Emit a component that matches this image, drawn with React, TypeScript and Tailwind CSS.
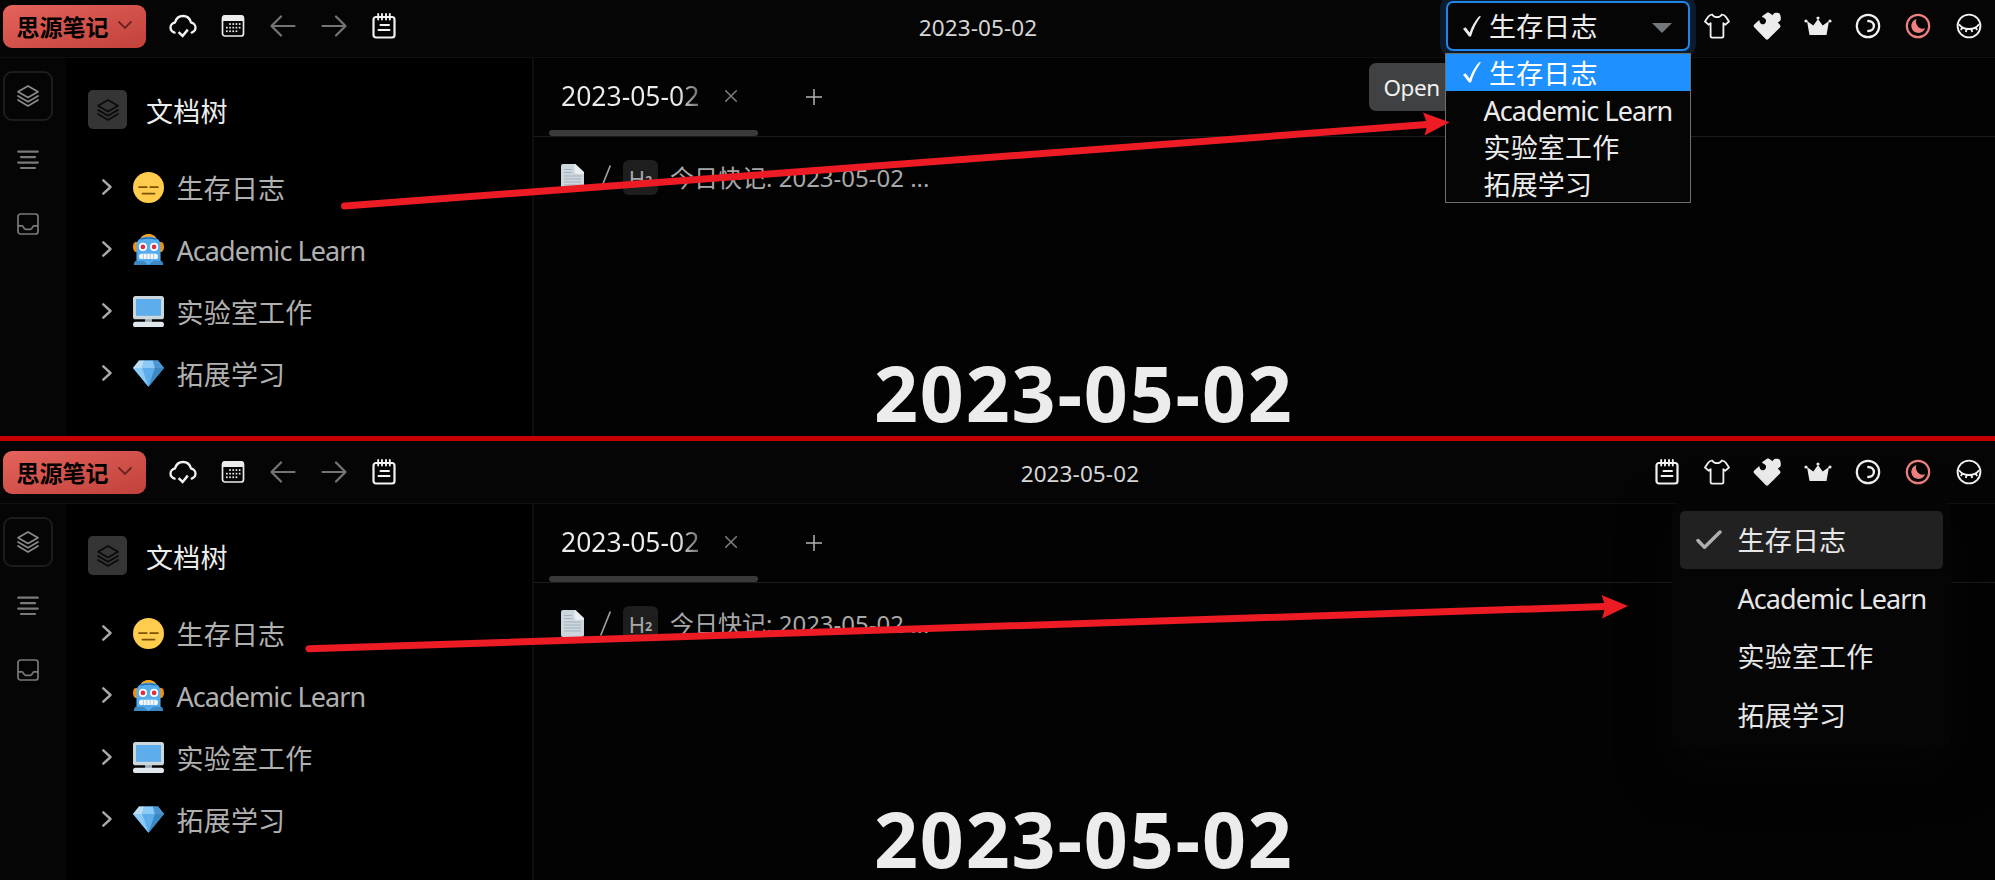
import React from "react";

type IconProps = { className?: string };

const CloudCheck = () => (
  <svg viewBox="0 0 28 24" className="h-6 w-7" fill="none" stroke="#f2f2f2" strokeWidth="2.3" strokeLinecap="round" strokeLinejoin="round">
    <path d="M5.6 18.6C3 17.8 1.5 16 1.5 13.6c0-2.7 2-4.8 4.5-5.1C7 4.7 10.2 2 14 2s7 2.7 8 6.5c2.5.3 4.5 2.4 4.5 5.1 0 2.4-1.5 4.2-3.8 5" />
    <path d="M9.6 18.2l4 3.800 5.200-6.400" strokeWidth="2.5" strokeLinecap="butt" strokeLinejoin="miter" />
  </svg>
);

const CalendarGrid = () => (
  <svg viewBox="0 0 24 24" className="size-6">
    <rect x="1.5" y="2" width="21" height="20" rx="2.5" fill="none" stroke="#ececec" strokeWidth="1.7" />
    <path d="M1 7V4a3 3 0 0 1 3-3h16a3 3 0 0 1 3 3v3z" fill="#ececec" />
    <g fill="#ececec">
      {[9.2, 12.8, 16.4].map((y, r) =>
        [5, 8.2, 11.4, 14.6, 17.8].map((x, c) =>
          (r === 0 && c < 1) || (r === 2 && c > 3) ? null : <rect key={`${r}${c}`} x={x} y={y} width="1.7" height="1.7" />
        )
      )}
    </g>
  </svg>
);

const ArrowIcon = ({ className = "" }: IconProps) => (
  <svg viewBox="0 0 26 22" className={`h-[22px] w-[26px] ${className}`} fill="none" stroke="#747474" strokeWidth="2.2" strokeLinecap="round" strokeLinejoin="round">
    <path d="M24.5 11H1.500M11 1.500L1.500 11l9.500 9.500" />
  </svg>
);

const NoteIcon = () => (
  <svg viewBox="0 0 24 26" className="h-[26px] w-6" fill="none" stroke="#f2f2f2" strokeLinecap="round">
    <rect x="1.500" y="4" width="21" height="20.500" rx="2.500" strokeWidth="2.200" />
    <path d="M6.200 1v5.500M10 1v5.500M14 1v5.500M17.800 1v5.500" strokeWidth="1.900" />
    <path d="M8.500 12h8.500M6.500 17h11" strokeWidth="2" />
  </svg>
);

const ShirtIcon = () => (
  <svg viewBox="0 0 26 26" className="size-[26px]" fill="none" stroke="#f2f2f2" strokeWidth="1.800" strokeLinejoin="round">
    <path d="M8 1.500c1.300 2 3 2.700 5 2.700s3.700-.7 5-2.700c2 .5 3 1 4 2.500l3 4.500-3.600 3.200-2-1.600V23c0 1-.6 1.600-1.600 1.600H8.200c-1 0-1.600-.6-1.600-1.600V10.100l-2 1.600L1 8.500 4 4c1-1.500 2-2 4-2.500z" />
  </svg>
);

const PuzzleIcon = () => (
  <svg viewBox="0 0 28 28" className="size-7" fill="#ececec">
    <path d="M1 12.800c-.5.700-.5 1.600 0 2.300l11.600 12c.8.800 2 .8 2.800 0L27 15.400c.6-.8.600-1.700 0-2.500l-2.300-2.700c2.500-.4 3.300-2 3.100-4.200C27.600 2 26.300.3 22.800.8c-1.700.2-2.500 1-3 2.400L16.400.9c-.8-.6-2-.6-2.800 0L9 4.300c.3 1 1.200 1.300 2 1.600 2 .8 2.500 2.500 1.700 4.300-.8 1.900-2.600 2.500-4.300 1.700C6.900 11.200 6.800 10 6.200 8z" />
  </svg>
);

const CrownIcon = () => (
  <svg viewBox="0 0 28 20" className="h-5 w-7" fill="#ececec">
    <path d="M3 5l6.300 4.600L14 3l4.700 6.600L25 5l-2.500 14h-17z" />
    <circle cx="14" cy="2" r="1.600" />
    <circle cx="2" cy="5" r="1.600" />
    <circle cx="26" cy="5" r="1.600" />
  </svg>
);

const RingCrescent = () => (
  <svg viewBox="0 0 26 26" className="size-[26px]" fill="none" stroke="#f2f2f2" strokeWidth="2.200" strokeLinecap="round">
    <circle cx="13" cy="13" r="11.200" />
    <path d="M13.300 8c3.200 0 5.600 2.200 5.600 5s-2.400 5-5.600 5" strokeWidth="2.400" />
  </svg>
);

const RingMoon = () => (
  <svg viewBox="0 0 26 26" className="size-[26px]">
    <circle cx="13" cy="13" r="11.200" fill="none" stroke="#ee8080" strokeWidth="2.200" />
    <path d="M11.500 6a7.100 7.100 0 1 0 8.600 9.200A6.900 6.900 0 0 1 11.500 6z" fill="#ee8080" />
  </svg>
);

const RingEye = () => (
  <svg viewBox="0 0 26 26" className="size-[26px]" fill="none" stroke="#f2f2f2" strokeWidth="1.900">
    <circle cx="13" cy="13" r="11.400" />
    <path d="M3 11.200c2.500 3.600 6 4.800 10 4.800s7.500-1.200 10-4.800M6.800 14l-2 3M10.800 15.700l-1 3.300M15.200 15.700l1 3.300M19.200 14l2 3" />
  </svg>
);

const LayersIcon = ({ className = "" }: IconProps) => (
  <svg viewBox="0 0 22 22" className={`size-[22px] ${className}`} fill="none" stroke="currentColor" strokeWidth="1.700" strokeLinejoin="round" strokeLinecap="round">
    <path d="M11 1l10 5.800-10 5.700L1 6.800z" />
    <path d="M1 11l10 5.800L21 11" />
    <path d="M1 15l10 6 10-6" />
  </svg>
);

const OutlineIcon = () => (
  <svg viewBox="0 0 22 20" className="h-5 w-[22px]" stroke="#7a7a7a" strokeWidth="2.200" strokeLinecap="round">
    <path d="M1.200 1.700h19.600M4 7.200h14M1.200 12.600h19.600M4 18h14" />
  </svg>
);

const InboxIcon = () => (
  <svg viewBox="0 0 22 22" className="size-[22px]" fill="none" stroke="#7a7a7a" strokeWidth="1.700" strokeLinejoin="round">
    <rect x="1" y="1" width="20" height="20" rx="2.500" />
    <path d="M1 12.800h4.200c1.200 0 1.300 3.600 3.400 3.600h4.800c2.100 0 2.200-3.600 3.400-3.600H21" />
  </svg>
);

const FaceEmoji = () => (
  <svg viewBox="0 0 36 36" className="size-[31px]">
    <circle cx="18" cy="18" r="18" fill="#ffcc4d" />
    <path d="M7 17.500h9M20 17.500h9M11 25h14" stroke="#7a5200" strokeWidth="2" strokeLinecap="round" />
  </svg>
);

const RobotEmoji = () => (
  <svg viewBox="0 0 36 36" className="size-[31px]">
    <ellipse cx="3.500" cy="15" rx="3.500" ry="6" fill="#f4900c" />
    <ellipse cx="32.500" cy="15" rx="3.500" ry="6" fill="#f4900c" />
    <path d="M9 5c1-3 5-5 9-5s8 2 9 5z" fill="#f9a11b" />
    <path d="M4 32V13C4 7 10 3 18 3s14 4 14 10v19z" fill="#55acee" />
    <path d="M8 6c3-2.600 17-2.600 20 0l-2 .5c-4-1.500-12-1.500-16 0z" fill="#226699" />
    <path d="M1 36c0-3 1-5 3-5h28c2 0 3 2 3 5z" fill="#3b88c3" />
    <path d="M12 31h12l-6 5z" fill="#55acee" />
    <circle cx="11.500" cy="15" r="4.700" fill="#fff" />
    <circle cx="24.500" cy="15" r="4.700" fill="#fff" />
    <circle cx="11.500" cy="15" r="2.700" fill="#dd2e44" />
    <circle cx="24.500" cy="15" r="2.700" fill="#dd2e44" />
    <rect x="7" y="23" width="22" height="6" rx="3" fill="#f5f8fa" />
    <path d="M12 23v6M16 23v6M20 23v6M24 23v6" stroke="#9fc4de" strokeWidth="1" />
  </svg>
);

const ScreenEmoji = () => (
  <svg viewBox="0 0 36 36" className="size-[31px]">
    <path d="M14 25h8v6h-8z" fill="#99aab5" />
    <rect x="0" y="0" width="36" height="27" rx="3" fill="#ccd6dd" />
    <rect x="3.500" y="3.500" width="29" height="19.500" fill="#5dadec" />
    <rect x="0" y="30" width="36" height="6" rx="3" fill="#e1e8ed" />
  </svg>
);

const GemEmoji = () => (
  <svg viewBox="0 0 36 31" className="h-[27px] w-[31px]">
    <path d="M7 .5h22l7 8.500-18 22L0 9z" fill="#5dadec" />
    <path d="M7 .5L0 9h10.500l2.500-8.500z" fill="#bdddf4" />
    <path d="M13 .5h10L25.500 9h-15z" fill="#8ccaf7" />
    <path d="M0 9h10.500L18 31z" fill="#8ccaf7" />
    <path d="M36 9H25.500L18 31z" fill="#3b88c3" />
    <path d="M29 .5L36 9H25.500L23 .5z" fill="#4b96d2" />
  </svg>
);

const DocEmoji = () => (
  <svg viewBox="0 0 23 27" className="h-[27px] w-[23px]">
    <path d="M2 0h12.500L23 8v17a2 2 0 0 1-2 2H2a2 2 0 0 1-2-2V2a2 2 0 0 1 2-2z" fill="#ccd6dd" />
    <path d="M14 0l9 8.500V10h-7a2.500 2.500 0 0 1-2.500-2.500V0z" fill="#e8eef2" />
    <path d="M3 5.500h8M3 8.500h8M3 12h17M3 15h17M3 18h17M3 21h17" stroke="#a3b2bd" strokeWidth="1.200" />
  </svg>
);

const notebooks: { name: string; tracking: string; emoji: React.ReactNode }[] = [
  { name: "生存日志", tracking: "tracking-[0.200px]", emoji: <FaceEmoji /> },
  { name: "Academic Learn", tracking: "tracking-[-0.930px]", emoji: <RobotEmoji /> },
  { name: "实验室工作", tracking: "tracking-[0.200px]", emoji: <ScreenEmoji /> },
  { name: "拓展学习", tracking: "tracking-[0.200px]", emoji: <GemEmoji /> },
];

const Slot = ({ children }: { children: React.ReactNode }) => (
  <div className="flex h-full w-[50.350px] shrink-0 items-center justify-center">{children}</div>
);

const Tick = () => (
  <svg viewBox="0 0 18 21" className="h-[21px] w-[18px] shrink-0" fill="currentColor">
    <path d="M0 12.800l2.600-1.600 4 5.400C9 10 12.200 4.800 16 .3h2C13.500 6.500 10.200 13 8 20.500H6z" />
  </svg>
);

const NotebookSelect = () => (
  <div className="relative mt-px mr-[2px] h-[50px] w-[244px] shrink-0 self-start rounded-[7px] border-2 border-[#2185e6] bg-[#050505] text-[#ececec] shadow-[0_0_0_6px_#0a1c2e]">
    <div className="flex h-full items-center pl-[15px] pr-[16px]">
      <Tick />
      <span className="ml-[8px] flex-1 text-[27px] leading-none tracking-[0.200px]">生存日志</span>
      <svg viewBox="0 0 20 10" className="mt-1 h-[10px] w-5">
        <path d="M0 0h20L10 10z" fill="#74777a" />
      </svg>
    </div>
    <div className="absolute -left-[3px] top-[50px] z-10 w-[246px] border border-[#6f6f6f] bg-[#050505]">
      {notebooks.map((n, i) =>
        i === 0 ? (
          <div key={n.name} className="flex h-[37px] items-center bg-[#1e90ff] pl-[17px] text-white">
            <Tick />
            <span className={`ml-[8px] pt-px text-[27px] leading-none ${n.tracking}`}>{n.name}</span>
          </div>
        ) : (
          <div key={n.name} className={`flex h-[37px] items-center whitespace-nowrap pl-[37.500px] pt-px text-[27px] leading-none ${n.tracking}`}>
            {n.name}
          </div>
        )
      )}
    </div>
    <div className="absolute -left-[79px] top-[60px] h-12 w-[77px] rounded-l-[7px] bg-[#404143] pl-[14.500px] text-[22.500px] leading-[50px] tracking-[-0.400px] text-[#f0f0f0]">
      Open
    </div>
  </div>
);

const NotebookMenu = () => (
  <div className="absolute right-[44px] top-[56px] z-10 h-[247px] w-[279px] rounded-[10px] bg-[#050505] px-2 pt-[9px] shadow-[0_20px_50px_rgba(8,8,8,0.5)]">
    {notebooks.map((n, i) => (
      <div key={n.name} className={`flex h-[58.300px] items-center whitespace-nowrap rounded-[5px] pl-4 text-[27px] leading-none text-[#e6e6e6] ${i === 0 ? "bg-[#212121]" : ""}`}>
        <span className="flex w-[41.500px]">
          {i === 0 && (
            <svg viewBox="0 0 26 20" className="h-5 w-[26px]" fill="none" stroke="#b0b0b0" strokeWidth="3.400" strokeLinecap="round" strokeLinejoin="round">
              <path d="M2 10.500l6.500 6.800L24 2" />
            </svg>
          )}
        </span>
        <span className={n.tracking}>{n.name}</span>
      </div>
    ))}
  </div>
);

const TopBar = ({ picker }: { picker: "select" | "menu" }) => (
  <header className="flex h-[58px] shrink-0 border-b border-[#101010] bg-[#050505] pb-[5px]">
    <div className="ml-[2.500px] mt-[4.500px] flex h-[43px] w-[143.500px] shrink-0 items-center rounded-[9px] bg-linear-to-br from-[#e4635c] to-[#c1423b] pl-[14px] text-black">
      <span className="pt-[2px] text-[23px] font-bold leading-none">思源笔记</span>
      <svg viewBox="0 0 14 8" className="-mt-0.5 ml-[9px] h-2 w-3.5" fill="none" stroke="#6b2320" strokeWidth="1.800" strokeLinecap="round">
        <path d="M1 1l6 6 6-6" />
      </svg>
    </div>
    <div className="ml-[11.500px] flex h-[52px] shrink-0">
      <Slot><CloudCheck /></Slot>
      <Slot><CalendarGrid /></Slot>
      <Slot><ArrowIcon /></Slot>
      <Slot><ArrowIcon className="rotate-180" /></Slot>
      <Slot><NoteIcon /></Slot>
    </div>
    <div className={`flex h-[56px] flex-1 items-center justify-center text-[22.500px] tracking-[0.100px] text-[#d6d6d6] ${picker === "select" ? "pl-[101px]" : "pl-[109px]"}`}>2023-05-02</div>
    {picker === "select" && <NotebookSelect />}
    <div className="mr-px flex h-[52px] shrink-0">
      {picker === "menu" && <Slot><NoteIcon /></Slot>}
      <Slot><ShirtIcon /></Slot>
      <Slot><PuzzleIcon /></Slot>
      <Slot><CrownIcon /></Slot>
      <Slot><RingCrescent /></Slot>
      <Slot><RingMoon /></Slot>
      <Slot><RingEye /></Slot>
    </div>
  </header>
);

const Rail = () => (
  <nav className="flex w-[66px] shrink-0 flex-col items-center bg-[#050505] pr-[10px] pt-[13px]">
    <div className="flex size-[50px] items-center justify-center rounded-[9px] border-2 border-[#1c1c1c] text-[#8a8a8a]">
      <LayersIcon />
    </div>
    <div className="mt-[7px] flex h-16 items-center"><OutlineIcon /></div>
    <div className="flex h-16 items-center"><InboxIcon /></div>
  </nav>
);

const DocTree = () => (
  <aside className="w-[467.500px] shrink-0 border-r-2 border-[#0e0e0e] bg-black pt-[32px]">
    <div className="flex h-[39px] items-center pl-[22px]">
      <div className="flex size-[39px] items-center justify-center rounded-[5px] bg-[#353535] text-[#0a0a0a]">
        <LayersIcon />
      </div>
      <span className="ml-[19px] mt-[3px] text-[27px] leading-none tracking-[0.200px] text-[#ececec]">文档树</span>
    </div>
    <ul className="mt-[27px]">
      {notebooks.map((n) => (
        <li key={n.name} className="flex h-[62.100px] items-center pl-9">
          <svg viewBox="0 0 10 16" className="h-4 w-2.5" fill="none" stroke="#a8a8a8" strokeWidth="2.400" strokeLinecap="round" strokeLinejoin="round">
            <path d="M1.300 1.300L8.500 8l-7.200 6.700" />
          </svg>
          <span className="ml-[20.500px] flex w-[31px]">{n.emoji}</span>
          <span className={`ml-[13px] mt-[2px] whitespace-nowrap text-[27px] leading-none text-[#b0b0b0] ${n.tracking}`}>{n.name}</span>
        </li>
      ))}
    </ul>
  </aside>
);

const Editor = () => (
  <main className="flex-1 bg-[#030303]">
    <div className="flex h-[78.500px] items-end border-b-[1.500px] border-[#1c1c1c]">
      <div className="ml-[15.500px] flex h-full w-[209px] flex-col">
        <div className="flex flex-1 items-center pl-3 pt-[5px]">
          <span className="bg-linear-to-r from-[#ececec] from-85% to-[#6a6a6a] bg-clip-text text-[26.500px] leading-none text-transparent">2023-05-02</span>
          <svg viewBox="0 0 12 12" className="ml-auto mr-[21px] size-3" stroke="#808080" strokeWidth="1.500" strokeLinecap="round">
            <path d="M.7.7l10.600 10.600M11.300.7L.7 11.300" />
          </svg>
        </div>
        <div className="h-[6px] w-full rounded-[3px] bg-[#3a3a3a]" />
      </div>
      <svg viewBox="0 0 16 16" className="mb-[31px] ml-12 size-4" stroke="#b4b4b4" strokeWidth="1.500">
        <path d="M8 0v16M0 8h16" />
      </svg>
    </div>
    <div className="mt-[23px] flex h-[35px] items-center pl-[27.500px] text-[24px] leading-none text-[#a8a8a8]">
      <DocEmoji />
      <svg viewBox="0 0 11 25" className="ml-[16px] h-[25px] w-[11px]" stroke="#a0a0a0" strokeWidth="1.600">
        <path d="M10.300.5L.7 24.500" />
      </svg>
      <span className="ml-[12px] flex size-[35px] items-center justify-center rounded-[6px] bg-[#1e1e1e] pt-px">
        <span className="text-[22px] leading-none">H</span>
        <span className="mt-[7px] text-[12.500px] font-bold leading-none">2</span>
      </span>
      <span className="ml-[12px] mt-px whitespace-nowrap">今日快记: 2023-05-02 ...</span>
    </div>
    <h1 className="ml-[340.500px] mt-[159px] whitespace-nowrap text-[77px] font-bold leading-[78px] tracking-[1.800px] text-[#ececec]">2023-05-02</h1>
  </main>
);

const Workspace = ({ picker }: { picker: "select" | "menu" }) => (
  <div className="relative flex h-full flex-col">
    <TopBar picker={picker} />
    {picker === "menu" && <NotebookMenu />}
    <div className="flex min-h-0 flex-1">
      <Rail />
      <DocTree />
      <Editor />
    </div>
  </div>
);

export default function App() {
  return (
    <div lang="zh-CN" className="relative h-[880px] w-[1995px] overflow-hidden bg-[#050505] font-['Noto_Sans','Noto_Sans_CJK_SC',sans-serif]">
      <section className="h-[441px] border-b-[5px] border-[#c40000]">
        <Workspace picker="select" />
      </section>
      <section className="h-[439px] pt-[5px]">
        <Workspace picker="menu" />
      </section>
      <svg viewBox="0 0 1995 880" className="pointer-events-none absolute inset-0 z-20 h-[880px] w-[1995px]" stroke="#ed1c24" strokeWidth="7" strokeLinecap="round">
        <path d="M344.500 206L1427 124.500" />
        <path d="M1449.500 122.300L1423 112.600l4.500 12-3 11z" fill="#ed1c24" stroke="none" />
        <path d="M309 648.700L1605 606.500" />
        <path d="M1628 606L1601.500 595l4 11.500-3.500 12z" fill="#ed1c24" stroke="none" />
      </svg>
    </div>
  );
}
